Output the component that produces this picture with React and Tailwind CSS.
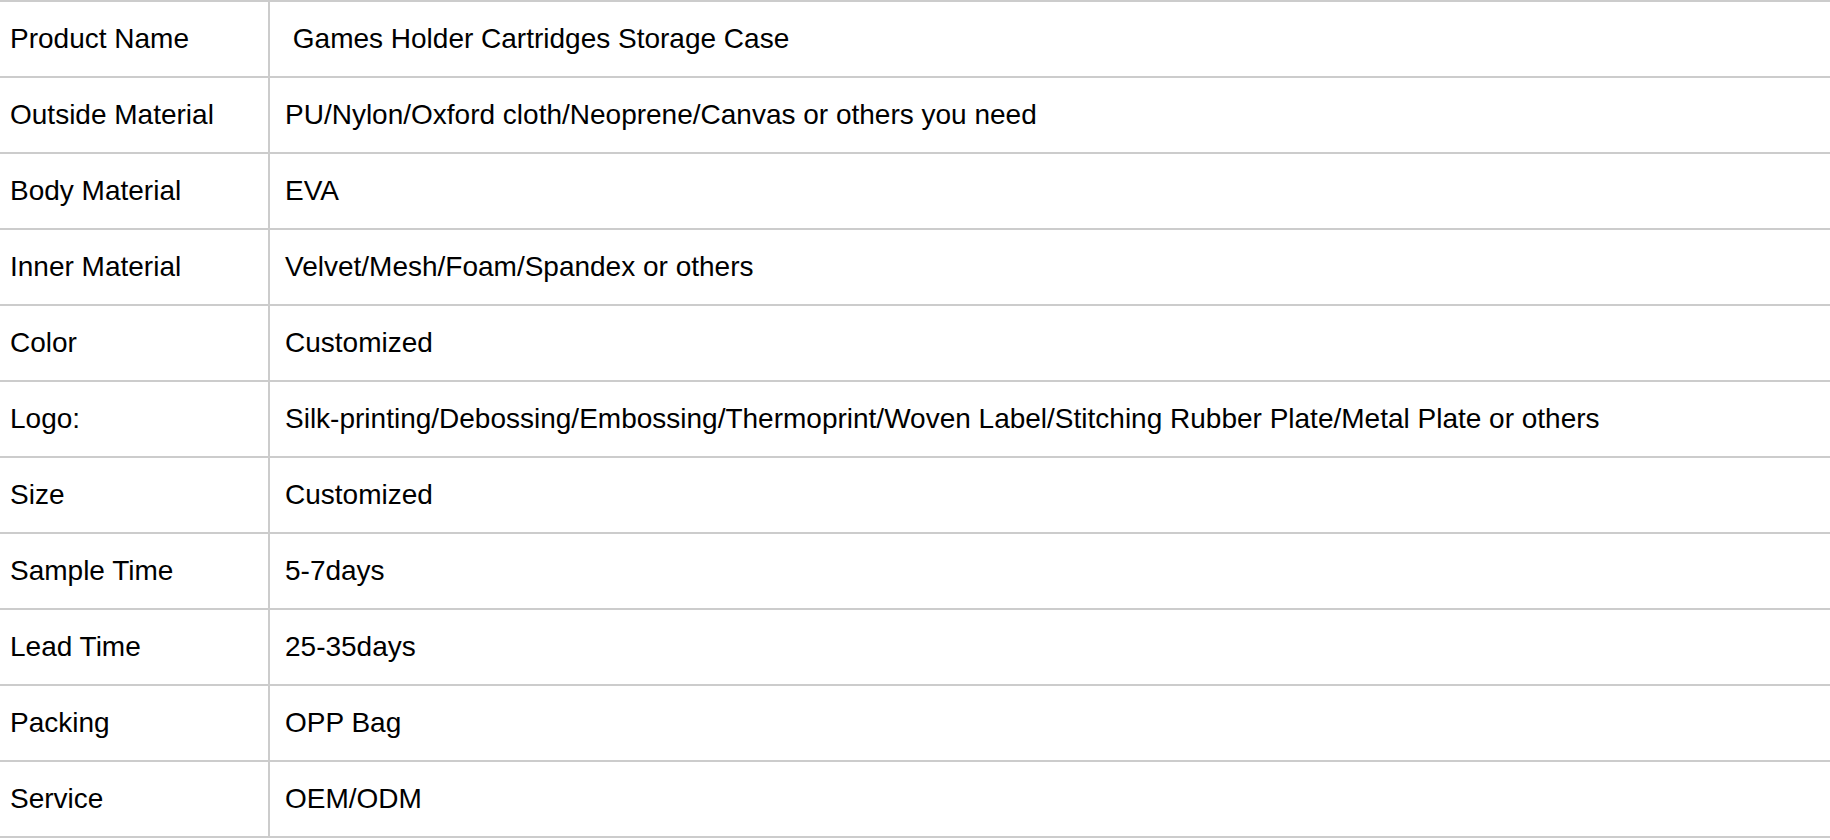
import React from 'react';

const rows = [
    ['Product Name', '\u00a0Games Holder Cartridges Storage Case'],
    ['Outside Material', 'PU/Nylon/Oxford cloth/Neoprene/Canvas or others you need'],
    ['Body Material', 'EVA'],
    ['Inner Material', 'Velvet/Mesh/Foam/Spandex or others'],
    ['Color', 'Customized'],
    ['Logo:', 'Silk-printing/Debossing/Embossing/Thermoprint/Woven Label/Stitching Rubber Plate/Metal Plate or others'],
    ['Size', 'Customized'],
    ['Sample Time', '5-7days'],
    ['Lead Time', '25-35days'],
    ['Packing', 'OPP Bag'],
    ['Service', 'OEM/ODM'],
];

const App = () => {
    return (
        <div className="w-[1830px] h-[840px] bg-white text-black font-['Liberation_Sans',Arial,sans-serif] text-[28px]">
            <div className="border-t-2 border-[#cccccc]">
                {rows.map(([label, value]) => (
                    <div key={label} className="flex h-[76px] border-b-2 border-[#cccccc]">
                        <div className="w-[270px] shrink-0 flex items-center pl-[10px] border-r-2 border-[#cccccc]">
                            {label}
                        </div>
                        <div className="flex-1 flex items-center pl-[15px] whitespace-nowrap">
                            {value}
                        </div>
                    </div>
                ))}
            </div>
        </div>
    );
};

export default App;
